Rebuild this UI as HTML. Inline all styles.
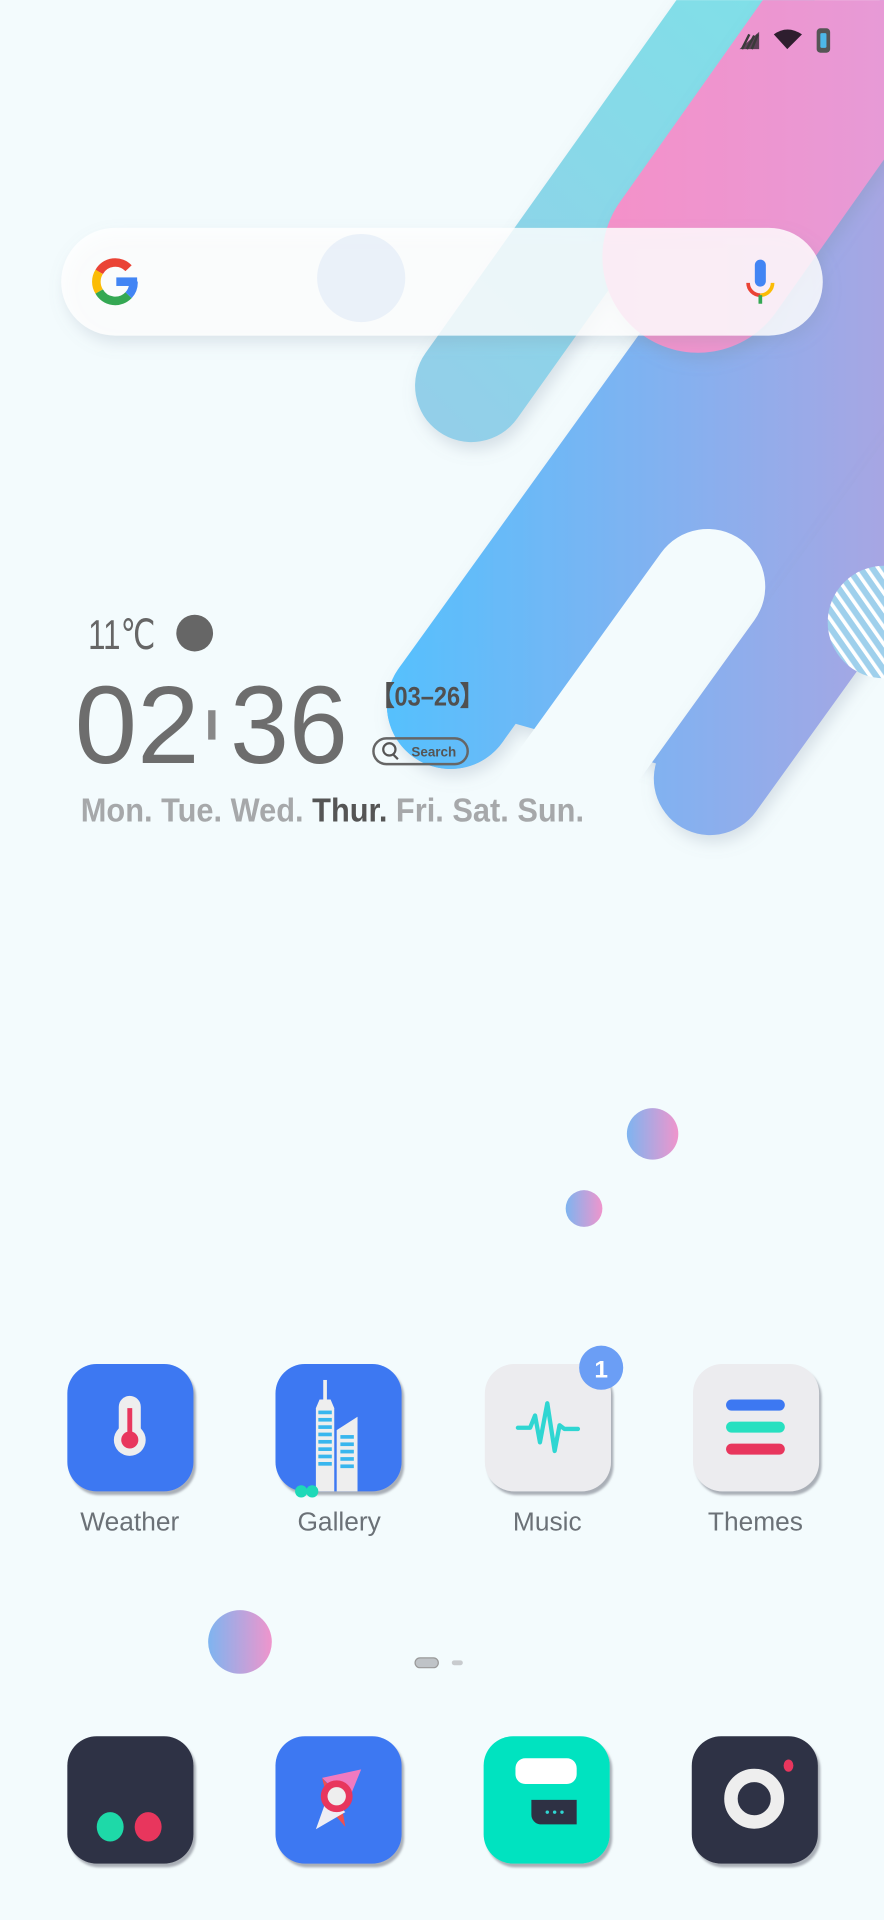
<!DOCTYPE html>
<html><head><meta charset="utf-8">
<style>
html,body{margin:0;padding:0;background:#f3fbfd;}
svg{display:block}
text{font-family:"Liberation Sans",sans-serif}
</style></head>
<body>
<svg width="884" height="1920" viewBox="0 0 722 1568" xmlns="http://www.w3.org/2000/svg">
<defs>
<linearGradient id="bl" x1="320" y1="0" x2="722" y2="0" gradientUnits="userSpaceOnUse">
<stop offset="0" stop-color="#56c0fd"/><stop offset="0.6" stop-color="#86b0ef"/><stop offset="1" stop-color="#a7a6e3"/></linearGradient>
<linearGradient id="cy" x1="340" y1="320" x2="650" y2="0" gradientUnits="userSpaceOnUse">
<stop offset="0" stop-color="#93cfe9"/><stop offset="1" stop-color="#7fe0e8"/></linearGradient>
<linearGradient id="pk" x1="480" y1="0" x2="722" y2="0" gradientUnits="userSpaceOnUse">
<stop offset="0" stop-color="#f590c8"/><stop offset="1" stop-color="#e79ad6"/></linearGradient>
<linearGradient id="bub" x1="0" y1="0" x2="1" y2="0">
<stop offset="0" stop-color="#7eb4f0"/><stop offset="1" stop-color="#ef95cc"/></linearGradient>
<filter id="sh" x="-30%" y="-30%" width="160%" height="160%"><feDropShadow dx="3" dy="6" stdDeviation="6" flood-color="#7a8ca0" flood-opacity="0.25"/></filter>
<filter id="ish" x="-10%" y="-10%" width="130%" height="130%"><feDropShadow dx="2" dy="3" stdDeviation="0.8" flood-color="#8a8f99" flood-opacity="0.7"/></filter>
<pattern id="str" width="8" height="8" patternUnits="userSpaceOnUse" patternTransform="rotate(-35)">
<rect width="8" height="8" fill="#9fd0ec"/><rect width="3" height="8" fill="#ffffff"/></pattern>
<clipPath id="cb"><rect x="0" y="0" width="722" height="1568"/></clipPath>
</defs>
<rect width="722" height="1568" fill="#f3fbfd"/>
<g clip-path="url(#cb)">
<line x1="385" y1="315" x2="680" y2="-100" stroke="url(#cy)" stroke-width="92" stroke-linecap="round" filter="url(#sh)"/>
<g filter="url(#sh)">
<line x1="368" y1="576" x2="900" y2="-163" stroke="url(#bl)" stroke-width="104" stroke-linecap="round"/>
<polygon points="368,576 900,-163 1100,-163 1012,36 580,636" fill="url(#bl)"/>
</g>
<line x1="578" y1="479" x2="290" y2="879" stroke="#f3fbfd" stroke-width="94" stroke-linecap="round"/>
<circle cx="368" cy="576" r="52" fill="url(#bl)"/>
<line x1="580" y1="636" x2="1012" y2="36" stroke="url(#bl)" stroke-width="92" stroke-linecap="round" filter="url(#sh)"/>
<circle cx="722" cy="508" r="46" fill="url(#str)"/>
<line x1="570" y1="210" x2="860" y2="-200" stroke="url(#pk)" stroke-width="156" stroke-linecap="round" filter="url(#sh)"/>
</g>
<g fill="#3a2a3a">
<path d="M604 40 L620 40 L620 26 Z" opacity="0.8"/>
<path d="M606 40 l6 -12 M610 40 l6 -11 M614 40 l5 -12" stroke="#3a3a3a" stroke-width="2"/>
<path d="M632 28 Q643 20 655 28 L643 40 Z" fill="#2e1e2e"/>
<rect x="667" y="23" width="11" height="20" rx="3" fill="#555"/>
<rect x="670" y="27" width="5" height="12" rx="1" fill="#4db8e8"/>
</g>
<rect x="50" y="186" width="622" height="88" rx="44" fill="#ffffff" fill-opacity="0.82" filter="url(#sh)"/>
<circle cx="295" cy="227" r="36" fill="#e6eef8" opacity="0.8"/>
<g transform="translate(94,230)">
<path d="M-13 -8 A15 15 0 0 1 11 -11" fill="none" stroke="#ea4335" stroke-width="7"/>
<path d="M-13 8 A15 15 0 0 1 -13 -8" fill="none" stroke="#fbbc05" stroke-width="7"/>
<path d="M11 11 A15 15 0 0 1 -13 8" fill="none" stroke="#34a853" stroke-width="7"/>
<path d="M15 0 A15 15 0 0 1 11 11" fill="none" stroke="#4285f4" stroke-width="7"/>
<rect x="1" y="-3.5" width="17" height="7" fill="#4285f4"/>
</g>
<g transform="translate(621,230)">
<rect x="-4.5" y="-18" width="9" height="22" rx="4.5" fill="#4285f4"/>
<path d="M-10 1 A10 10 0 0 0 0 11" fill="none" stroke="#ea4335" stroke-width="3"/>
<path d="M10 1 A10 10 0 0 1 0 11" fill="none" stroke="#fbbc05" stroke-width="3"/>
<rect x="-1.5" y="11" width="3" height="7" fill="#34a853"/>
</g>
<text x="72" y="530" font-size="34" fill="#666" textLength="55" lengthAdjust="spacingAndGlyphs">11℃</text>
<circle cx="159" cy="517" r="15" fill="#666"/>
<text x="61" y="623" font-size="90" fill="#6d6d6d" textLength="102" lengthAdjust="spacingAndGlyphs">02</text>
<rect x="170" y="580" width="6" height="24" fill="#888"/>
<text x="188" y="623" font-size="90" fill="#6d6d6d" textLength="96" lengthAdjust="spacingAndGlyphs">36</text>
<text x="303" y="576" font-size="22" font-weight="bold" fill="#505050" textLength="92" lengthAdjust="spacingAndGlyphs">【03–26】</text>
<rect x="305" y="603" width="77" height="21" rx="10.5" fill="none" stroke="#666" stroke-width="2"/>
<circle cx="318" cy="612" r="5" fill="none" stroke="#555" stroke-width="1.8"/>
<line x1="321" y1="616" x2="325" y2="620" stroke="#555" stroke-width="1.8"/>
<text x="336" y="618" font-size="11" font-weight="bold" fill="#555">Search</text>
<text x="66" y="671" font-size="27" font-weight="bold" fill="#a6a8aa" textLength="411" lengthAdjust="spacingAndGlyphs">Mon. Tue. Wed. <tspan fill="#555">Thur.</tspan> Fri. Sat. Sun.</text>
<circle cx="533" cy="926" r="21" fill="url(#bub)"/>
<circle cx="477" cy="987" r="15" fill="url(#bub)"/>
<circle cx="196" cy="1341" r="26" fill="url(#bub)"/>
<g filter="url(#ish)">
<rect x="55" y="1114" width="103" height="104" rx="24" fill="#3d78f2"/>
<rect x="225" y="1114" width="103" height="104" rx="24" fill="#3d78f2"/>
<rect x="396" y="1114" width="103" height="104" rx="24" fill="#ececef"/>
<rect x="566" y="1114" width="103" height="104" rx="24" fill="#ececef"/>
</g>
<rect x="97" y="1140" width="18" height="40" rx="9" fill="#eee"/>
<circle cx="106" cy="1176" r="13" fill="#eee"/>
<rect x="104" y="1150" width="4" height="24" fill="#e8365d"/>
<circle cx="106" cy="1176" r="7" fill="#e8365d"/>
<rect x="264" y="1127" width="3" height="18" fill="#eee"/>
<path d="M258 1150 L261 1143 L270 1143 L273 1150 V1218 H258 Z" fill="#eee"/>
<path d="M275 1218 V1168 L292 1157 V1218 Z" fill="#eee"/>
<g fill="#38b6ee">
<rect x="260" y="1152" width="11" height="3"/><rect x="260" y="1158" width="11" height="3"/><rect x="260" y="1164" width="11" height="3"/><rect x="260" y="1170" width="11" height="3"/><rect x="260" y="1176" width="11" height="3"/><rect x="260" y="1182" width="11" height="3"/><rect x="260" y="1188" width="11" height="3"/><rect x="260" y="1194" width="11" height="3"/>
<rect x="278" y="1172" width="11" height="3"/><rect x="278" y="1178" width="11" height="3"/><rect x="278" y="1184" width="11" height="3"/><rect x="278" y="1190" width="11" height="3"/><rect x="278" y="1196" width="11" height="3"/>
</g>
<circle cx="246" cy="1218" r="5" fill="#1ed9b8"/><circle cx="255" cy="1218" r="5" fill="#1ed9b8"/>
<path d="M423 1166 H433 L437 1156 L441 1178 L447 1146 L453 1185 L457 1164 L461 1167 H472" fill="none" stroke="#2fd6d2" stroke-width="3.5" stroke-linecap="round" stroke-linejoin="round"/>
<circle cx="491" cy="1117" r="18" fill="#6b9ef5"/>
<text x="491" y="1125" font-size="20" font-weight="bold" fill="#fff" text-anchor="middle">1</text>
<rect x="593" y="1143" width="48" height="9" rx="4.5" fill="#3d78f2"/>
<rect x="593" y="1161" width="48" height="9" rx="4.5" fill="#27e0c0"/>
<rect x="593" y="1179" width="48" height="9" rx="4.5" fill="#e8365d"/>
<g font-size="21.5" fill="#6b7177" text-anchor="middle">
<text x="106" y="1250">Weather</text>
<text x="277" y="1250">Gallery</text>
<text x="447" y="1250">Music</text>
<text x="617" y="1250">Themes</text>
</g>
<rect x="339" y="1354" width="19" height="8" rx="4" fill="#bfc3c7" stroke="#999" stroke-width="1"/>
<rect x="369" y="1356" width="9" height="4" rx="2" fill="#c8cbce"/>
<g filter="url(#ish)">
<rect x="55" y="1418" width="103" height="104" rx="24" fill="#2e3144"/>
<rect x="225" y="1418" width="103" height="104" rx="24" fill="#3d78f2"/>
<rect x="395" y="1418" width="103" height="104" rx="24" fill="#00e3c0"/>
<rect x="565" y="1418" width="103" height="104" rx="24" fill="#2e3144"/>
</g>
<ellipse cx="90" cy="1492" rx="11" ry="12" fill="#1ed9a8"/>
<ellipse cx="121" cy="1492" rx="11" ry="12" fill="#e8365d"/>
<path d="M263 1452 L295 1445 L284 1472 Z" fill="#f07ac0"/>
<path d="M263 1452 L278 1468 L282 1492 L270 1478 Z" fill="#f05050"/>
<path d="M258 1494 L268 1466 L282 1480 Z" fill="#eeeef5"/>
<circle cx="275" cy="1467" r="13" fill="#e8365d"/>
<circle cx="275" cy="1467" r="7.5" fill="#eee"/>
<rect x="421" y="1436" width="50" height="21" rx="8" fill="#fff"/>
<path d="M434 1470 H471 V1490 H441 A8 8 0 0 1 434 1482 Z" fill="#2e3144"/>
<circle cx="447" cy="1480" r="1.4" fill="#2fd6d2"/><circle cx="453" cy="1480" r="1.4" fill="#2fd6d2"/><circle cx="459" cy="1480" r="1.4" fill="#2fd6d2"/>
<circle cx="616" cy="1469" r="19" fill="none" stroke="#eee" stroke-width="11"/>
<ellipse cx="644" cy="1442" rx="4" ry="5" fill="#e8365d"/>
</svg>
</body></html>
